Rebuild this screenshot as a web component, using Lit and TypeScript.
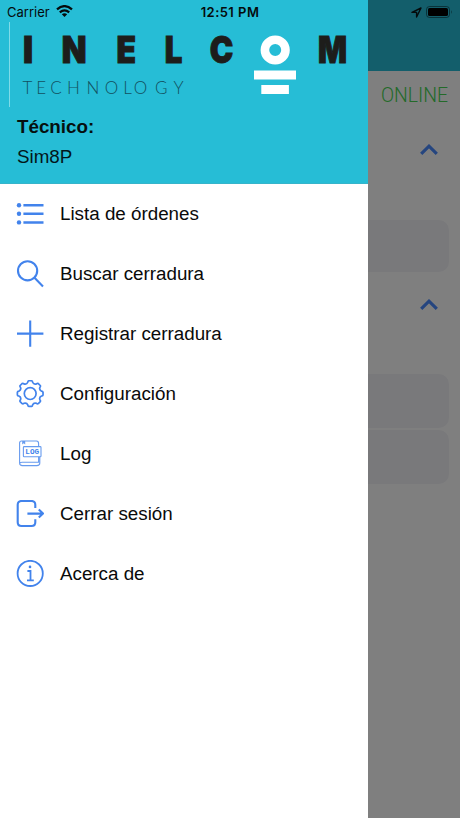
import { LitElement, html, svg, css } from "lit";
import { customElement } from "lit/decorators.js";

// Outline of the settings cog: eight rounded teeth around a circle.
const cogPath = (() => {
  const pt = (r: number, deg: number) => {
    const a = (deg * Math.PI) / 180;
    return `${(14 + r * Math.sin(a)).toFixed(2)} ${(14 - r * Math.cos(a)).toFixed(2)}`;
  };
  let d = "";
  for (let i = 0; i < 8; i++) {
    const a = i * 45;
    d += `${i ? "L" : "M"}${pt(11.6, a - 12)}Q${pt(12.8, a - 11)} ${pt(12.9, a - 6)}L${pt(12.9, a + 6)}Q${pt(12.8, a + 11)} ${pt(11.6, a + 12)}Q${pt(9.4, a + 22.5)} ${pt(11.6, a + 33)}`;
  }
  return d + "Z";
})();

const icons = {
  list: svg`<g stroke-width="2.5"><path d="M7.4 5.2H27.5M7.4 13.8H27.5M7.4 22.4H27.5"/></g>
    <g fill="currentColor" stroke="none"><circle cx="3" cy="5.2" r="2.2"/><circle cx="3" cy="13.8" r="2.2"/><circle cx="3" cy="22.4" r="2.2"/></g>`,
  search: svg`<g stroke-width="2.1"><circle cx="11.6" cy="10.8" r="9.6"/><path d="M18.3 17.6L27 26.4"/></g>`,
  add: svg`<path stroke-width="2.1" d="M14.2 .4V26.8M1 13.6H27.4"/>`,
  cog: svg`<g stroke-width="1.7" stroke-linejoin="round" transform="translate(.2 -.4)"><path d="${cogPath}"/><circle cx="14" cy="14" r="5.9"/></g>`,
  log: svg`<g stroke-width="1.1" opacity=".8"><path d="M22.6 6.6V3.8Q22.6 1 20.4 1H5.6Q3.6 1 3.6 3V23Q3.6 25.6 6.4 25.6H20.8Q23.8 25.6 23.8 23V16.8M22.6 16.8V22.2H6.2Q3.6 22.2 3.6 23.8"/>
    <rect x="7.4" y="6.6" width="17.6" height="10.2" rx=".8"/><path fill="currentColor" stroke="none" d="M6.2 1h3v3.4l-1.5-1.1-1.5 1.1z"/></g>
    <text class="tag" x="16.2" y="14.3">LOG</text>`,
  logout: svg`<path stroke-width="2.1" d="M19.3 8V4.8Q19.3 1 15.5 1H5.5Q1.7 1 1.7 4.8V22.2Q1.7 26 5.5 26H15.5Q19.3 26 19.3 22.2V19.2M11.4 13.6H26.6M22.8 9.6L27 13.6L22.8 17.6"/>`,
  info: svg`<g transform="translate(.2 -.6)"><circle cx="14" cy="14" r="12.6" stroke-width="1.8"/><circle cx="13.8" cy="7.5" r="1.3" fill="currentColor" stroke="none"/><path stroke-width="1.8" d="M11.2 11.6H14.3V21M10.8 21H17.6"/></g>`,
};

const menu = [
  { icon: icons.list, label: "Lista de órdenes" },
  { icon: icons.search, label: "Buscar cerradura" },
  { icon: icons.add, label: "Registrar cerradura" },
  { icon: icons.cog, label: "Configuración" },
  { icon: icons.log, label: "Log" },
  { icon: icons.logout, label: "Cerrar sesión" },
  { icon: icons.info, label: "Acerca de" },
];

@customElement("app-logo")
export class AppLogo extends LitElement {
  static styles = css`
    :host { display: block; height: 87px; }
    svg { display: block; }
    .name { font: 900 36.6px Inter, sans-serif; fill: #1d1d1b; stroke: #1d1d1b; stroke-width: 1; text-anchor: middle; }
    .sub { font: 300 17px Lato, sans-serif; fill: #12505f; text-anchor: middle; }
  `;
  private letters: [string, number, number][] = [
    ["I", 28, 0.95], ["N", 74.2, 0.88], ["E", 126.3, 0.87], ["L", 173.6, 0.85], ["C", 221.6, 0.86], ["M", 332.5, 0.83],
  ];
  render() {
    return html`<svg width="368" height="87" viewBox="0 22 368 87">
      <path d="M9.5 22V107" stroke="#7fdbe8" />
      ${this.letters.map(([c, x, s]) => svg`<text class="name" transform="translate(${x} 63.1) scale(${s} 1)">${c}</text>`)}
      <circle cx="275.2" cy="50" r="10.3" fill="none" stroke="#fff" stroke-width="8.6" />
      <path fill="#fff" d="M254 70.5h42v9h-42zM261.3 85h27.6v9h-27.6z" />
      <text class="sub" y="93.9" x="27.5 41.3 56 73.5 93 111.5 127.5 140.5 161.3 178.5">TECHNOLOGY</text>
    </svg>`;
  }
}

@customElement("status-bar")
export class StatusBar extends LitElement {
  static styles = css`
    :host { display: grid; grid-template-columns: 1fr auto 1fr; align-items: center; height: 24px; padding: 0 7px; color: #050b0c; font: 13px/24px Inter, sans-serif; }
    .side { display: flex; align-items: center; gap: 6px; }
    .end { justify-content: flex-end; gap: 4px; }
    .time { font-weight: 600; letter-spacing: .45px; }
    svg { display: block; }
    .wifi { margin-top: -2px; }
  `;
  render() {
    return html`
      <div class="side"><span>Carrier</span>
        <svg class="wifi" width="17" height="12" viewBox="0 0 17 12" fill="none" stroke="currentColor" stroke-width="2.3"><path d="M1 4.3Q8.5-2 16 4.3M3.8 7.4Q8.5 3.4 13.2 7.4"/><path fill="currentColor" stroke="none" d="M5.8 9.3Q8.5 7 11.2 9.3L8.5 12z"/></svg>
      </div>
      <span class="time">12:51 PM</span>
      <div class="side end">
        <svg width="11" height="11" viewBox="0 0 11 11" fill="none" stroke="currentColor" stroke-width="1.4" stroke-linejoin="round"><path d="M1 5.4L10 1L5.6 10V5.4z"/></svg>
        <svg width="27" height="12" viewBox="0 0 27 12"><rect x=".5" y=".5" width="23" height="11" rx="3" fill="none" stroke="#000" stroke-opacity=".45"/><rect x="2" y="2" width="20" height="8" rx="1.6"/><path d="M25 4q1.6 2 0 4z" fill-opacity=".5"/></svg>
      </div>`;
  }
}

@customElement("orders-page")
export class OrdersPage extends LitElement {
  static styles = css`
    :host { display: block; height: 818px; background: #fff; }
    .bar { height: 71px; background: #26bdd6; }
    .online { height: 49px; padding-right: 12px; text-align: right; font: 300 19.4px/49px Roboto, sans-serif; color: #46d452; }
    .head { display: flex; justify-content: flex-end; align-items: center; height: 58px; padding-right: 22px; }
    .head + .cards { margin-top: 42px; }
    .second { margin-top: 3px; }
    .second + .cards { margin-top: 41px; }
    .cards { display: grid; gap: 2px; padding: 0 11px; }
    .card { height: 54px; border-radius: 10px; background: #f3f3f7; }
    .card.short { height: 52px; }
    svg { display: block; }
  `;
  private chevron = () => html`<svg width="18" height="11" viewBox="0 0 18 11" fill="none" stroke="#4a8bff" stroke-width="3.2"><path d="M1.2 9.8L9 2.2L16.8 9.8"/></svg>`;
  render() {
    return html`
      <div class="bar"></div>
      <div class="online">ONLINE</div>
      <div class="head">${this.chevron()}</div>
      <div class="cards"><div class="card short"></div></div>
      <div class="head second">${this.chevron()}</div>
      <div class="cards"><div class="card"></div><div class="card"></div></div>`;
  }
}

@customElement("app-root")
export class AppRoot extends LitElement {
  static styles = css`
    :host { display: block; position: relative; width: 460px; height: 818px; overflow: hidden; font-family: "Liberation Sans", sans-serif; }
    .scrim { position: absolute; inset: 0; background: rgba(0, 0, 0, .5); }
    .drawer { position: absolute; inset: 0 auto 0 0; width: 368px; background: #fff; color: #0a0a0a; font-size: 18.8px; }
    .head { box-sizing: border-box; height: 184px; padding-top: 22px; background: #26bdd6; border-bottom: 1px solid #36b4ca; }
    .who { padding: 3px 17px 0; line-height: 30px; color: #03171a; }
    .role { font-weight: 700; color: #06100f; }
    .item { display: flex; align-items: center; gap: 16px; height: 60px; padding-left: 16px; }
    .item svg { flex: none; fill: none; stroke: currentColor; color: #4283ec; }
    .tag { font: 700 7.6px "Liberation Mono", monospace; text-anchor: middle; fill: currentColor; stroke: none; }
    .status { position: absolute; inset: 0 0 auto 0; }
  `;
  render() {
    return html`
      <orders-page></orders-page>
      <div class="scrim"></div>
      <nav class="drawer">
        <div class="head">
          <app-logo></app-logo>
          <div class="who"><div class="role">Técnico:</div><div>Sim8P</div></div>
        </div>
        ${menu.map((m) => html`<div class="item"><svg width="28" height="28" viewBox="0 0 28 28">${m.icon}</svg><span>${m.label}</span></div>`)}
      </nav>
      <status-bar class="status"></status-bar>`;
  }
}
